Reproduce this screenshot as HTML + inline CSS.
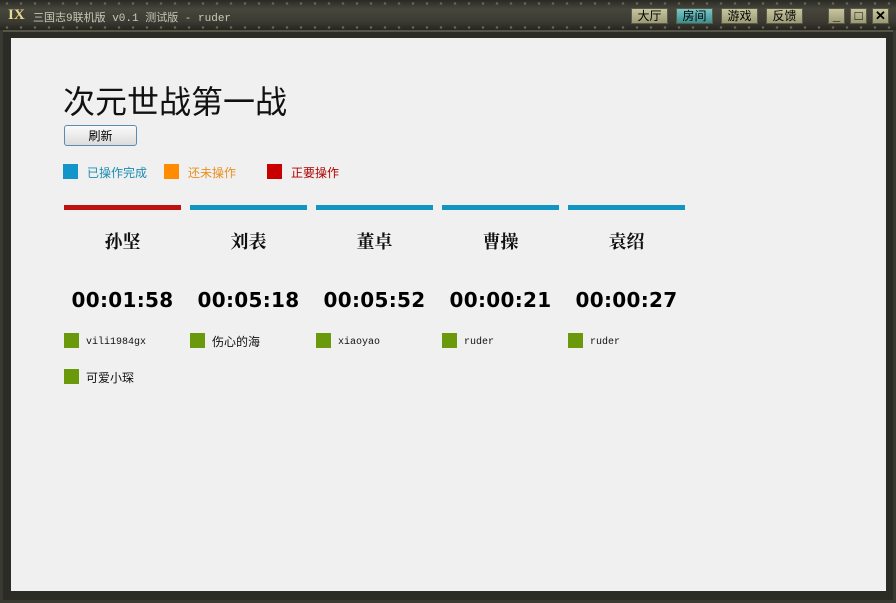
<!DOCTYPE html>
<html><head><meta charset="utf-8"><style>
*{margin:0;padding:0;box-sizing:border-box}
body{width:896px;height:603px;background:#3a3a33;position:relative;overflow:hidden;font-family:"Liberation Sans","Noto Sans CJK SC",sans-serif}
.tb{position:absolute;left:0;top:0;width:896px;height:30px;background:linear-gradient(#2a2a25,#46463c 30%,#3c3c34 70%,#26261f);}
.rivets{position:absolute;left:0;width:896px;height:3px;background-image:radial-gradient(circle,#66665a 1px,transparent 1.5px);background-size:14px 3px}
.ttl{position:absolute;left:33px;top:9px;font-family:"Liberation Mono","Noto Sans CJK SC",monospace;font-size:11px;color:#c8c8b8}
.logo{position:absolute;left:8px;top:7px;width:17px;height:17px;font:bold 15px "Liberation Serif",serif;color:#e8d890;line-height:17px}
.btn{position:absolute;top:8px;height:16px;width:37px;background:linear-gradient(#c8c6a0,#9c9a74);border:1px solid #5a5a46;font-size:12px;line-height:14px;text-align:center;color:#000;font-family:"Noto Sans CJK SC",sans-serif}
.btn.on{background:linear-gradient(#7cc8c8,#3a9090)}
.wb{position:absolute;top:8px;width:17px;height:16px;background:linear-gradient(#c8c6a0,#9c9a74);border:1px solid #5a5a46;font:bold 13px "Liberation Sans";text-align:center;line-height:14px}
.frame{position:absolute;left:3px;top:30px;width:890px;height:570px;background:#2c2c27;border-top:2px solid #55554a}
.cont{position:absolute;left:11px;top:38px;width:875px;height:553px;background:#f0f0f0}
.a{position:absolute;white-space:nowrap}
.h1{left:63px;top:80px;font-size:32px;color:#111;font-family:"Noto Sans CJK SC",sans-serif;line-height:40px}
.ref{left:64px;top:125px;width:73px;height:21px;border:1px solid #5a8cb0;border-radius:3px;background:linear-gradient(#fafafa,#dcdcdc);font-size:12px;text-align:center;line-height:19px;font-family:"Noto Sans CJK SC",sans-serif}
.sq{position:absolute;width:15px;height:15px}
.lg{font-size:12px;top:164px;font-family:"Noto Sans CJK SC",sans-serif}
.bar{position:absolute;top:205px;height:5px;width:117px;background:#1295c0}
.nm{top:228px;width:117px;text-align:center;font:bold 18px "Noto Serif CJK SC",serif;color:#111}
.tm{top:288px;width:117px;text-align:center;font:bold 20px "DejaVu Sans",sans-serif;color:#000;letter-spacing:0.3px}
.pl{font-size:10px;font-family:"Liberation Mono",monospace;color:#111}
.pc{font-size:12px;font-family:"Noto Sans CJK SC",sans-serif;color:#111}
.g{background:#6a9a0c}
</style></head><body>
<div class="tb"><div class="rivets" style="top:2px"></div><div class="rivets" style="top:26px"></div></div>
<div class="logo">IX</div>
<div class="ttl">三国志9联机版 v0.1 测试版 - ruder</div>
<div class="btn" style="left:631px">大厅</div>
<div class="btn on" style="left:676px">房间</div>
<div class="btn" style="left:721px">游戏</div>
<div class="btn" style="left:766px">反馈</div>
<div class="wb" style="left:828px">_</div>
<div class="wb" style="left:850px">□</div>
<div class="wb" style="left:872px">✕</div>
<div class="frame"></div>
<div class="cont"></div>
<div class="a h1">次元世战第一战</div>
<div class="a ref">刷新</div>
<div class="sq" style="left:63px;top:164px;background:#1295c8"></div><div class="a lg" style="left:87px;color:#1a8cb0">已操作完成</div>
<div class="sq" style="left:164px;top:164px;background:#ff8c00"></div><div class="a lg" style="left:188px;color:#e89020">还未操作</div>
<div class="sq" style="left:267px;top:164px;background:#c80000"></div><div class="a lg" style="left:291px;color:#b00000">正要操作</div>
<div class="bar" style="left:64px;background:#c01010"></div>
<div class="bar" style="left:190px"></div>
<div class="bar" style="left:316px"></div>
<div class="bar" style="left:442px"></div>
<div class="bar" style="left:568px"></div>
<div class="a nm" style="left:64px">孙坚</div>
<div class="a nm" style="left:190px">刘表</div>
<div class="a nm" style="left:316px">董卓</div>
<div class="a nm" style="left:442px">曹操</div>
<div class="a nm" style="left:568px">袁绍</div>
<div class="a tm" style="left:64px">00:01:58</div>
<div class="a tm" style="left:190px">00:05:18</div>
<div class="a tm" style="left:316px">00:05:52</div>
<div class="a tm" style="left:442px">00:00:21</div>
<div class="a tm" style="left:568px">00:00:27</div>
<div class="sq g" style="left:64px;top:333px"></div><div class="a pl" style="left:86px;top:337px">vili1984gx</div>
<div class="sq g" style="left:190px;top:333px"></div><div class="a pc" style="left:212px;top:333px">伤心的海</div>
<div class="sq g" style="left:316px;top:333px"></div><div class="a pl" style="left:338px;top:337px">xiaoyao</div>
<div class="sq g" style="left:442px;top:333px"></div><div class="a pl" style="left:464px;top:337px">ruder</div>
<div class="sq g" style="left:568px;top:333px"></div><div class="a pl" style="left:590px;top:337px">ruder</div>
<div class="sq g" style="left:64px;top:369px"></div><div class="a pc" style="left:86px;top:369px">可爱小琛</div>
</body></html>
